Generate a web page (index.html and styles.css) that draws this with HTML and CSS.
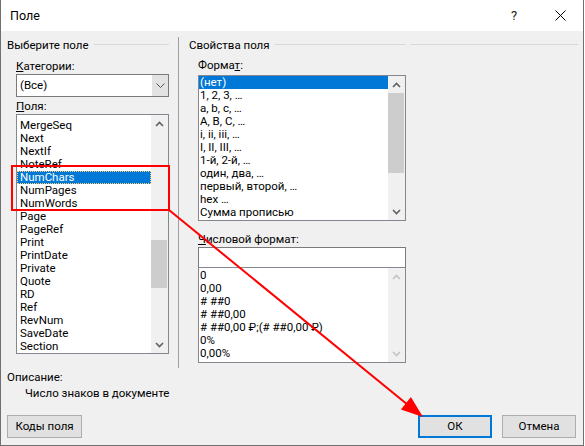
FILE: index.html
```html
<!DOCTYPE html>
<html lang="ru">
<head>
<meta charset="utf-8">
<title>Поле</title>
<link rel="stylesheet" href="styles.css">
</head>
<body>
<div class="window">
  <div class="titlebar">
    <span class="title">Поле</span>
    <span class="tb-btn help">?</span>
    <span class="tb-btn close">
      <svg width="11" height="11" viewBox="0 0 11 11"><path d="M0.5 0.5 L10.5 10.5 M10.5 0.5 L0.5 10.5" stroke="#000" stroke-width="1" fill="none"/></svg>
    </span>
  </div>

  <div class="main">
    <section class="group group-field">
      <div class="group-head"><span>Выберите поле</span><i class="rule"></i></div>
      <div class="indent">
        <div class="label label-cat"><u>К</u>атегории:</div>
        <div class="combo">
          <span class="combo-value">(Все)</span>
          <span class="combo-btn">
            <svg width="9" height="5" viewBox="0 0 9 5"><polyline points="0.5,0.5 4.5,4.5 8.5,0.5" fill="none" stroke="#555" stroke-width="1"/></svg>
          </span>
        </div>
        <div class="label label-fields"><u>П</u>оля:</div>
        <div class="listbox listbox-fields">
          <ul class="items items-fields">
            <li>MergeSeq</li>
            <li>Next</li>
            <li>NextIf</li>
            <li>NoteRef</li>
            <li class="sel focus">NumChars</li>
            <li>NumPages</li>
            <li>NumWords</li>
            <li>Page</li>
            <li>PageRef</li>
            <li>Print</li>
            <li>PrintDate</li>
            <li>Private</li>
            <li>Quote</li>
            <li>RD</li>
            <li>Ref</li>
            <li>RevNum</li>
            <li>SaveDate</li>
            <li>Section</li>
          </ul>
          <div class="scrollbar">
            <span class="sb-btn"><svg width="9" height="6" viewBox="0 0 9 6"><polyline points="1,5 4.5,1.5 8,5" fill="none" stroke="#606060" stroke-width="1.6"/></svg></span>
            <div class="sb-track"><div class="sb-thumb thumb-fields"></div></div>
            <span class="sb-btn"><svg width="9" height="6" viewBox="0 0 9 6"><polyline points="1,1 4.5,4.5 8,1" fill="none" stroke="#606060" stroke-width="1.6"/></svg></span>
          </div>
        </div>
      </div>
    </section>

    <div class="divider"></div>

    <section class="group group-props">
      <div class="group-head"><span>Свойства поля</span><i class="rule"></i></div>
      <div class="indent">
        <div class="label label-format">Форма<u>т</u>:</div>
        <div class="listbox listbox-format">
          <ul class="items items-format">
            <li class="sel">(нет)</li>
            <li>1, 2, 3, …</li>
            <li>a, b, c, …</li>
            <li>A, B, C, …</li>
            <li>i, ii, iii, …</li>
            <li>I, II, III, …</li>
            <li>1-й, 2-й, …</li>
            <li>один, два, …</li>
            <li>первый, второй, …</li>
            <li>hex …</li>
            <li>Сумма прописью</li>
          </ul>
          <div class="scrollbar">
            <span class="sb-btn"><svg width="9" height="6" viewBox="0 0 9 6"><polyline points="1,5 4.5,1.5 8,5" fill="none" stroke="#606060" stroke-width="1.6"/></svg></span>
            <div class="sb-track"><div class="sb-thumb thumb-format"></div></div>
            <span class="sb-btn"><svg width="9" height="6" viewBox="0 0 9 6"><polyline points="1,1 4.5,4.5 8,1" fill="none" stroke="#606060" stroke-width="1.6"/></svg></span>
          </div>
        </div>

        <div class="label label-number"><u>Ч</u>исловой формат:</div>
        <div class="textbox"></div>
        <div class="listbox listbox-number">
          <ul class="items items-number">
            <li>0</li>
            <li>0,00</li>
            <li># ##0</li>
            <li># ##0,00</li>
            <li># ##0,00 ₽;(# ##0,00 ₽)</li>
            <li>0%</li>
            <li>0,00%</li>
          </ul>
          <div class="scrollbar disabled">
            <span class="sb-btn"><svg width="9" height="6" viewBox="0 0 9 6"><polyline points="1,5 4.5,1.5 8,5" fill="none" stroke="#c4c4c4" stroke-width="1.6"/></svg></span>
            <div class="sb-track"></div>
            <span class="sb-btn"><svg width="9" height="6" viewBox="0 0 9 6"><polyline points="1,1 4.5,4.5 8,1" fill="none" stroke="#c4c4c4" stroke-width="1.6"/></svg></span>
          </div>
        </div>
      </div>
    </section>

    <section class="group group-options">
      <div class="group-head"><i class="rule rule-full"></i></div>
    </section>
  </div>

  <div class="desc">
    <div class="desc-title">Описание:</div>
    <div class="desc-text">Число знаков в документе</div>
  </div>

  <div class="buttons">
    <button class="btn btn-codes">Ко<u>д</u>ы поля</button>
    <span class="spacer"></span>
    <button class="btn btn-ok">ОК</button>
    <button class="btn btn-cancel">Отмена</button>
  </div>

  <svg class="annotation" width="585" height="446" viewBox="0 0 585 446">
    <rect x="12" y="166" width="157" height="44" fill="none" stroke="#ff0000" stroke-width="2"/>
    <line x1="169" y1="210" x2="408" y2="405" stroke="#ff0000" stroke-width="2"/>
    <polygon points="423,417 400.9,409.4 410.9,397" fill="#ff0000"/>
  </svg>
</div>
</body>
</html>
```

FILE: styles.css
```css
html, body {
  margin: 0;
  padding: 0;
  background: #ffffff;
}

.window {
  position: relative;
  width: 584px;
  height: 446px;
  box-sizing: border-box;
  border: 1px solid #707070;
  border-top: none;
  background: #f0f0f0;
  font-family: Roboto, "Segoe UI", sans-serif;
  font-size: 11.5px;
  color: #000;
  display: flex;
  flex-direction: column;
}

/* title bar */
.titlebar {
  height: 31px;
  flex: none;
  background: #ffffff;
  display: flex;
  align-items: center;
  padding-left: 9px;
}

.title {
  flex: 1;
  font-size: 12.5px;
  line-height: 16px;
}

.tb-btn {
  width: 46px;
  height: 31px;
  display: flex;
  align-items: center;
  justify-content: center;
}

.help {
  font-size: 13px;
  color: #1a1a1a;
}

/* three column area */
.main {
  display: flex;
  margin-top: 6px;
  height: 331px;
  flex: none;
  padding-left: 6px;
}

.group-field {
  width: 162px;
}

.divider {
  width: 1px;
  margin-left: 9px;
  background: #a0a0a0;
}

.group-props {
  width: 217px;
  margin-left: 10px;
}

.group-options {
  width: 168px;
  margin-left: 4px;
}

.group-head {
  display: flex;
  align-items: center;
  height: 16px;
  line-height: 16px;
  white-space: nowrap;
}

.rule {
  flex: 1;
  height: 1px;
  margin-left: 5px;
  margin-top: -1px;
  background: #d9d9d9;
}

.rule-full {
  margin-left: 0;
}

.indent {
  padding-left: 9px;
}

.label {
  height: 16px;
  line-height: 16px;
  white-space: nowrap;
}

.label-cat {
  margin-top: 5px;
}

.label-fields {
  margin-top: 1px;
}

.label-format {
  margin-top: 4px;
  margin-bottom: 2px;
}

.label-number {
  margin-top: 10px;
}

/* combo box */
.combo {
  height: 23px;
  box-sizing: border-box;
  border: 1px solid #7a7a7a;
  background: #ffffff;
  display: flex;
}

.combo-value {
  flex: 1;
  padding-left: 3px;
  line-height: 21px;
}

.combo-btn {
  width: 16px;
  background: #e3e3e3;
  display: flex;
  align-items: center;
  justify-content: center;
}

/* list boxes */
.listbox {
  box-sizing: border-box;
  border: 1px solid #828790;
  background: #ffffff;
  display: flex;
}

.listbox-fields {
  height: 240px;
}

.listbox-format {
  height: 146px;
}

.listbox-number {
  height: 96px;
}

.items {
  list-style: none;
  margin: 0;
  padding: 0;
  flex: 1;
  overflow: hidden;
}

.items li {
  height: 13px;
  line-height: 13px;
  white-space: nowrap;
}

.items-fields {
  padding-top: 4px;
}

.items-fields li {
  padding-left: 3px;
}

.items-format li,
.items-number li {
  padding-left: 1px;
}

.items-number {
  padding-top: 1px;
}

.items li.sel {
  background: #0078d7;
  color: #ffffff;
}

.items li.focus {
  outline: 1px dotted #ffcf70;
  outline-offset: -1px;
}

.textbox {
  height: 20px;
  box-sizing: border-box;
  border: 1px solid #7a7a7a;
  border-bottom: none;
  background: #ffffff;
}

/* scroll bars */
.scrollbar {
  width: 17px;
  flex: none;
  display: flex;
  flex-direction: column;
  background: #f0f0f0;
}

.sb-btn {
  height: 17px;
  flex: none;
  display: flex;
  align-items: center;
  justify-content: center;
}

.sb-track {
  flex: 1;
}

.sb-thumb {
  margin: 0 1px 0 0;
  background: #cdcdcd;
}

.thumb-fields {
  margin-top: 108px;
  height: 48px;
}

.thumb-format {
  height: 80px;
}

/* description */
.desc {
  margin-top: 1px;
  padding-left: 6px;
  line-height: 16px;
}

.desc-text {
  padding-left: 18px;
}

/* dialog buttons */
.buttons {
  display: flex;
  margin-top: 14px;
  padding: 0 7px 0 6px;
}

.spacer {
  flex: 1;
}

.btn {
  height: 23px;
  box-sizing: border-box;
  border: 1px solid #adadad;
  background: #e1e1e1;
  font: inherit;
  color: #000;
  padding: 0;
  line-height: 19px;
}

.btn-codes {
  width: 75px;
}

.btn-ok {
  width: 74px;
  border: 2px solid #0078d7;
}

.btn-cancel {
  width: 74px;
  margin-left: 10px;
}

/* red callout drawn over the dialog */
.annotation {
  position: absolute;
  left: -1px;
  top: 0;
  pointer-events: none;
}
```
